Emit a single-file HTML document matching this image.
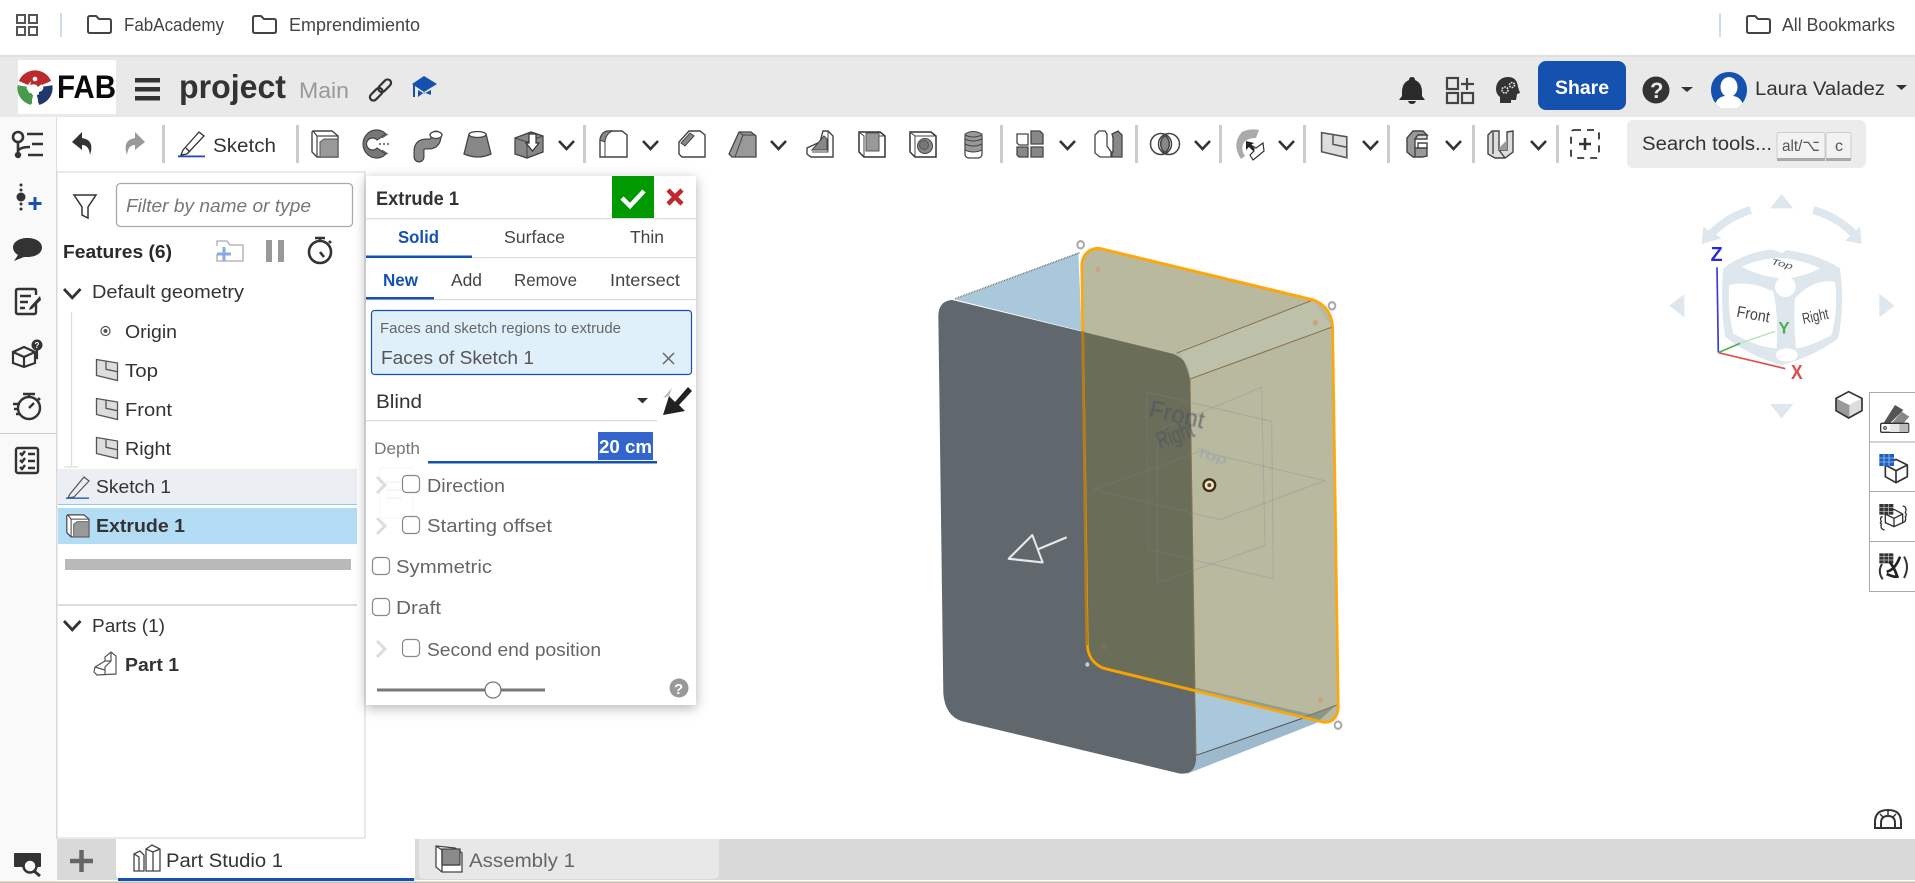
<!DOCTYPE html>
<html><head><meta charset="utf-8"><title>project</title>
<style>
html,body{margin:0;padding:0;background:#fff;width:1915px;height:883px;overflow:hidden}
svg{display:block;position:absolute;left:0;top:0}
text{font-family:"Liberation Sans","DejaVu Sans",sans-serif;fill:#333;white-space:pre}
</style></head><body>
<svg width="1915" height="883" viewBox="0 0 1915 883" xmlns="http://www.w3.org/2000/svg">
<defs>
<filter id="sh" x="-15%" y="-10%" width="130%" height="120%"><feDropShadow dx="0" dy="3" stdDeviation="6" flood-color="#000" flood-opacity=".3"/></filter>
<filter id="bl" x="-5%" y="-5%" width="110%" height="110%"><feGaussianBlur stdDeviation=".4"/></filter>
<g id="chev"><path d="M0 0L7.5 8L15 0" fill="none" stroke="#333" stroke-width="2.6"/></g>
<g id="plane"><path d="M.5 .5L21.500 4V21.500L.5 16.500z" fill="#ddd" stroke="#555" stroke-width="1.300"/><path d="M10 2V10.300L21.500 12.700" fill="none" stroke="#555" stroke-width="1.300"/></g>
<g id="cb"><rect x=".5" y=".5" width="17" height="17" rx="4" fill="#fff" stroke="#888" stroke-width="1.200"/></g>
<g id="gch"><path d="M0 0L8 8L0 16" fill="none" stroke="#ddd" stroke-width="3"/></g>
<g id="fold"><path d="M1 3Q1 1 3 1H9L12 4H22Q24 4 24 6V16Q24 18 22 18H3Q1 18 1 16z" fill="none" stroke="#444" stroke-width="2"/></g>
</defs>

<!-- bookmarks bar -->
<rect width="1915" height="55" fill="#fff"/>
<rect y="55" width="1915" height="2" fill="#dfdfdf"/>
<g fill="none" stroke="#555" stroke-width="2"><rect x="17" y="15" width="8" height="8"/><rect x="29" y="15" width="8" height="8"/><rect x="17" y="27" width="8" height="8"/><rect x="29" y="27" width="8" height="8"/></g>
<rect x="60" y="13" width="2" height="24" fill="#c9dcf5"/>
<use href="#fold" x="87" y="15"/>
<text x="124" y="31" font-size="18" textLength="100" lengthAdjust="spacingAndGlyphs" style="fill:#444">FabAcademy</text>
<use href="#fold" x="252" y="15"/>
<text x="289" y="31" font-size="18" textLength="131" lengthAdjust="spacingAndGlyphs" style="fill:#444">Emprendimiento</text>
<rect x="1719" y="13" width="2" height="24" fill="#c9dcf5"/>
<use href="#fold" x="1746" y="15"/>
<text x="1782" y="31" font-size="18" textLength="113" lengthAdjust="spacingAndGlyphs" style="fill:#444">All Bookmarks</text>

<!-- header -->
<rect y="57" width="1915" height="60" fill="#e9e9e9"/>
<rect x="18" y="60" width="98" height="54" fill="#fff"/>
<path d="M23.500 83A12.500 12.500 0 0 1 46.500 83" fill="none" stroke="#bd2a2c" stroke-width="10"/>
<path d="M30 85Q36 83 38 87L44 82L32 78z" fill="#bd2a2c"/>
<path d="M22.500 86A12.500 12.500 0 0 0 32 100" fill="none" stroke="#4a9a4e" stroke-width="10"/>
<path d="M47.500 86A12.500 12.500 0 0 1 38 100" fill="none" stroke="#23386a" stroke-width="10"/>
<path d="M27 96Q30 91 32 94L32 104L26 102z" fill="#4a9a4e"/>
<path d="M39 92L44 90L43 100L38 103z" fill="#23386a"/>
<circle cx="29" cy="88" r="2.300" fill="#fff"/><circle cx="41" cy="88" r="2.300" fill="#fff"/><circle cx="35" cy="79" r="2.300" fill="#fff"/>
<text x="57" y="98" font-size="32" font-weight="bold" textLength="59" lengthAdjust="spacingAndGlyphs" style="fill:#0a0a0a">FAB</text>
<g fill="#333"><rect x="135" y="78" width="25" height="4.500"/><rect x="135" y="87" width="25" height="4.500"/><rect x="135" y="96" width="25" height="4.500"/></g>
<text x="179" y="98" font-size="33" font-weight="bold" textLength="107" lengthAdjust="spacingAndGlyphs">project</text>
<text x="299" y="98" font-size="22" textLength="50" lengthAdjust="spacingAndGlyphs" style="fill:#999">Main</text>
<g transform="rotate(-45 380.500 90)" fill="none" stroke="#333" stroke-width="2.200"><rect x="367" y="86.500" width="15" height="7" rx="3.500"/><rect x="379" y="86.500" width="15" height="7" rx="3.500"/></g>
<g fill="#1552af"><path d="M412 84L424 76L437 84L424 92z"/><path d="M418 90L424 93.500L431 90V95L424 92.500L418 97z"/><rect x="413" y="85" width="2" height="12"/></g>

<!-- header right -->
<path d="M1412 77Q1415 77 1415 80Q1422 83 1422 92V96L1425 100H1399L1402 96V92Q1402 83 1409 80Q1409 77 1412 77zM1408 101H1416Q1415 104 1412 104Q1409 104 1408 101z" fill="#2b2b2b"/>
<g fill="none" stroke="#444" stroke-width="2.200"><rect x="1447" y="78" width="11" height="11"/><rect x="1447" y="93" width="11" height="10"/><rect x="1462" y="93" width="11" height="10"/><path d="M1467 78V90M1461 84H1474"/></g>
<path d="M1508 77C1500 77 1496 83 1496 89Q1496 94 1500 97V103H1511V100H1516L1517 94L1520 93L1518 87Q1517 77 1508 77z" fill="#333"/>
<circle cx="1505" cy="90" r="3" fill="none" stroke="#e9e9e9" stroke-width="1.600" stroke-dasharray="1.600 1"/><circle cx="1512" cy="85" r="2.500" fill="none" stroke="#e9e9e9" stroke-width="1.600" stroke-dasharray="1.600 1"/>
<rect x="1538" y="61" width="88" height="49" rx="8" fill="#1552af"/>
<text x="1555" y="94" font-size="19" font-weight="bold" textLength="54" lengthAdjust="spacingAndGlyphs" style="fill:#fff">Share</text>
<circle cx="1656" cy="90" r="13.500" fill="#333"/>
<text x="1650" y="98" font-size="22" font-weight="bold" style="fill:#e9e9e9">?</text>
<path d="M1681 87H1693L1687 92z" fill="#333"/>
<clipPath id="av"><path d="M1711 90C1711 78 1720 72 1729 72S1747 78 1747 90Q1747 100 1738 108H1720Q1711 100 1711 90z"/></clipPath>
<g clip-path="url(#av)"><rect x="1711" y="72" width="36" height="36" fill="#1552af"/><ellipse cx="1729" cy="87" rx="8.500" ry="10" fill="#fff"/><path d="M1714 108Q1716 97 1725 96H1733Q1742 97 1744 108z" fill="#fff"/></g>
<text x="1755" y="95" font-size="19" textLength="130" lengthAdjust="spacingAndGlyphs">Laura Valadez</text>
<path d="M1896 85H1907L1901.500 90z" fill="#333"/>

<!-- left rail -->
<rect y="117" width="57" height="722" fill="#f9f9f9"/>
<rect x="56" y="117" width="1" height="722" fill="#ddd"/>
<rect y="839" width="57" height="44" fill="#f9f9f9"/>
<g fill="none" stroke="#333" stroke-width="2.600"><circle cx="18" cy="137" r="5"/><path d="M18 142V153M18 151Q20 147 30 147M27 134H43M32 144H43M28 155H43"/></g><circle cx="18" cy="155" r="3.200" fill="#333"/>
<g fill="#333"><circle cx="21" cy="185" r="1.500"/><circle cx="21" cy="190" r="1.500"/><circle cx="21" cy="197" r="4.500"/><circle cx="21" cy="204" r="1.500"/><circle cx="21" cy="209" r="1.500"/></g>
<path d="M35 197V210M28.500 203.500H41.500" stroke="#1552af" stroke-width="3"/>
<path d="M27.500 238C36 238 42 242 42 247.500S36 257 27.500 257H24L14 261L18 255Q13 252 13 247.500C13 242 19 238 27.500 238z" fill="#333"/>
<g fill="none" stroke="#333" stroke-width="2.400"><path d="M36 303V312Q36 314 34 314H18Q16 314 16 312V291Q16 289 18 289H34Q36 289 36 291V295"/><path d="M20 296H31M20 302H28M20 308H25"/></g><path d="M30 307L40 296L41 300L32 309L29 310z" fill="#333"/>
<g fill="none" stroke="#333" stroke-width="2.200"><path d="M24 347L35 352V363L24 367L13 363V352zM13 352L24 357L35 352M24 357V367"/><path d="M35 358H37V350"/></g><circle cx="37" cy="345" r="5.500" fill="#333"/><text x="34.500" y="348" font-size="8" font-weight="bold" style="fill:#fff">?</text>
<g fill="none" stroke="#333" stroke-width="2.400"><circle cx="29" cy="408" r="11"/><path d="M23 394H35M29 394V397M38 398L40 400M29 408L34 403M13 404H20M14 409H19M16 414H20"/></g>
<rect x="0" y="433" width="56" height="1" fill="#ccc"/>
<g fill="none" stroke="#333" stroke-width="2.400"><rect x="16" y="448" width="22" height="25" rx="2"/><path d="M20 453L22 455L25 451M20 460L22 462L25 458M20 467L22 469L25 465"/><path d="M28 454H35M28 461H35M28 468H35"/></g>
<rect x="14" y="853" width="27" height="14" fill="#333" rx="1"/><circle cx="30" cy="866" r="6.500" fill="#f9f9f9" stroke="#333" stroke-width="2.500"/><path d="M34 871L40 876" stroke="#333" stroke-width="3"/>

<!-- toolbar seps -->
<g fill="#ccc"><rect x="162" y="125" width="3" height="38"/><rect x="296" y="125" width="3" height="38"/><rect x="583" y="125" width="3" height="38"/><rect x="1000" y="125" width="3" height="38"/><rect x="1135" y="125" width="3" height="38"/><rect x="1219" y="125" width="3" height="38"/><rect x="1303" y="125" width="3" height="38"/><rect x="1387" y="125" width="3" height="38"/><rect x="1472" y="125" width="3" height="38"/><rect x="1556" y="125" width="3" height="38"/></g>

<!-- undo / redo / sketch -->
<path d="M82 132L72 142L82 150V145Q89 145 90 155Q95 140 82 138z" fill="#333"/>
<path d="M135 132L145 142L135 150V145Q128 145 127 155Q122 140 135 138z" fill="#999"/>
<g fill="none" stroke="#333" stroke-width="1.300"><path d="M183 150L199 132L204 136L187 154L181 155z"/><path d="M186 148L190 152"/></g><rect x="178" y="155.500" width="27" height="1.800" fill="#1552af"/>
<text x="213" y="152" font-size="19" textLength="63" lengthAdjust="spacingAndGlyphs">Sketch</text>

<!-- toolbar icons -->
<g transform="translate(311,130)"><path d="M2 1H21L27 6V27H6L1 22V2z" fill="#fff" stroke="#444" stroke-width="1.400"/><path d="M9 12L13 9H27V27H9z" fill="#999" stroke="#555"/><path d="M2 1L6 6V27M6 6H27" fill="none" stroke="#444" stroke-width="1.200"/></g>
<g transform="translate(362,130)"><path d="M24 4A13.500 14 0 1 0 24 24L15 18A6 6 0 1 1 15 10z" fill="#777" stroke="#444" stroke-width="1.200"/><path d="M17 14H28" stroke="#333" stroke-width="1.200" stroke-dasharray="2 2"/><path d="M20 8L26 4M20 20L26 24" stroke="#555"/></g>
<g transform="translate(413,130)"><path d="M6 27V21Q6 14 13 14H16Q23 14 23 6" fill="none" stroke="#444" stroke-width="11" stroke-linecap="round"/><path d="M6 27V21Q6 14 13 14H16Q23 14 23 6" fill="none" stroke="#8a8a8a" stroke-width="8.500" stroke-linecap="round"/><ellipse cx="23" cy="5" rx="6" ry="3.500" fill="#fff" stroke="#444" stroke-width="1.300"/></g>
<g transform="translate(464,130)"><path d="M5 4L22 4L27 24Q14 30 0 24z" fill="#888" stroke="#444" stroke-width="1.300"/><ellipse cx="13.500" cy="4.500" rx="8.500" ry="3" fill="#fff" stroke="#444" stroke-width="1.300"/></g>
<g transform="translate(515,130)"><path d="M0 8L16 2L28 6V22L12 28L0 24z" fill="#888" stroke="#444" stroke-width="1.300"/><path d="M0 8L12 12L28 6M12 12V28" stroke="#444" fill="none"/><path d="M14 4H21V13H24L17.500 21L11 13H14z" fill="#fff" stroke="#333" stroke-width="1.200"/></g>
<use href="#chev" x="559" y="141"/>
<g transform="translate(599,130)"><path d="M1 27V10Q2 2 9 1H23L28 5V27z" fill="#fff" stroke="#444" stroke-width="1.400"/><path d="M1 10Q2 2 9 1H14Q7 3 6 12z" fill="#888" stroke="#444"/><path d="M6 12V27" stroke="#444"/></g>
<use href="#chev" x="643" y="141"/>
<g transform="translate(678,130)"><path d="M1 12L11 1H22L27 5V27H4L1 24z" fill="#fff" stroke="#444" stroke-width="1.400"/><path d="M3 13L12 3L16 6L7 16z" fill="#888" stroke="#444"/></g>
<g transform="translate(729,130)"><path d="M0 24L10 2H22L27 6V27H3z" fill="#999" stroke="#444" stroke-width="1.300"/><path d="M10 2L14 5H27M14 5L6 27" fill="none" stroke="#444"/></g>
<use href="#chev" x="771" y="141"/>
<g transform="translate(806,130)"><path d="M1 18V24L5 27H27V6L22 1H17L14 12z" fill="#fff" stroke="#444" stroke-width="1.400"/><path d="M6 20L18 6L21 9V20z" fill="#888" stroke="#444"/><path d="M22 1V22H6" fill="none" stroke="#444"/></g>
<g transform="translate(858,130)"><path d="M1 2H22L27 6V27H6L1 22z" fill="#fff" stroke="#333" stroke-width="1.500"/><path d="M8 3H21V21H8z" fill="#999" stroke="#555"/><path d="M1 2L6 6V27M21 6H27" fill="none" stroke="#444"/></g>
<g transform="translate(909,130)"><path d="M1 2H22L27 6V27H6L1 22z" fill="#fff" stroke="#333" stroke-width="1.500"/><path d="M1 2L6 6V27M6 6H27" fill="none" stroke="#444"/><circle cx="16" cy="16" r="7.500" fill="#888" stroke="#444"/><circle cx="15" cy="15" r="4.500" fill="#777" stroke="#555"/></g>
<g transform="translate(964,130)"><rect x="1" y="3" width="17" height="25" rx="4" fill="#fff" stroke="#444" stroke-width="1.300"/><path d="M1 4Q9 -1 18 4V20Q9 24 1 20z" fill="#999" stroke="#444"/><path d="M1 9Q9 13 18 9M1 14Q9 18 18 14M1 5Q9 9 18 5" fill="none" stroke="#444"/></g>
<g transform="translate(1016,130)" stroke="#444" stroke-width="1.300"><path d="M1 4H12V15H3L1 13z" fill="#fff"/><path d="M15 1H24L27 4V14H15z" fill="#888"/><path d="M1 17H12V27H3L1 25z" fill="#888"/><path d="M15 17H27V27H15z" fill="#888"/></g>
<use href="#chev" x="1060" y="141"/>
<g transform="translate(1094,130)" stroke="#444" stroke-width="1.300"><path d="M1 5L5 1H11L13 4V16L17 22V27H6L1 23z" fill="#fff"/><path d="M18 4L24 1L28 5V27H18V22H19V8z" fill="#888"/></g>
<g transform="translate(1150,133)" stroke="#444" stroke-width="1.500"><circle cx="11" cy="11" r="10.500" fill="#fff"/><circle cx="19" cy="11" r="10.500" fill="none"/><path d="M15 2.500A10.500 10.500 0 0 1 15 19.500A10.500 10.500 0 0 1 15 2.500z" fill="#888"/></g>
<use href="#chev" x="1195" y="141"/>
<g transform="translate(1234,129)"><path d="M7 30Q-3 15 8 3Q16 -1 25 1L22 9Q12 9 9 15Q7 22 11 27z" fill="#aaa"/><path d="M15 15L22 19L29 14L30 22L24 27L19 31L16 26L20 22z" fill="#fff" stroke="#333" stroke-width="1.200"/><path d="M12 12L12 21L15 18L19 22L21 20L17 16L20 14z" fill="#222"/></g>
<use href="#chev" x="1279" y="141"/>
<use href="#plane" transform="translate(1321,132) scale(1.200)"/>
<use href="#chev" x="1363" y="141"/>
<g transform="translate(1406,130)" stroke="#444" stroke-width="1.400"><path d="M1 8L7 1H17L21 5H12L9 9V18H21V26L16 27H7L1 22z" fill="#999"/><path d="M12 5L9 9H21V5zM9 18V27" fill="#ddd"/><path d="M12 13H21V18H12z" fill="#fff"/></g>
<use href="#chev" x="1446" y="141"/>
<g transform="translate(1487,130)" stroke="#444" stroke-width="1.400"><path d="M1 5L5 1H12V20H20V2L26 1V22L18 28H8L1 24z" fill="#ddd"/><path d="M6 2V24M12 20L18 28" fill="none"/><path d="M12 18L20 10V20H12z" fill="#999" stroke="none"/></g>
<use href="#chev" x="1531" y="141"/>
<rect x="1571" y="130" width="28" height="28" rx="3" fill="none" stroke="#333" stroke-width="1.800" stroke-dasharray="7 6"/><path d="M1585 138V150M1579 144H1591" stroke="#333" stroke-width="2.500"/>

<!-- search tools -->
<rect x="1627" y="120" width="239" height="48" rx="6" fill="#ececec"/>
<text x="1642" y="150" font-size="19" textLength="130" lengthAdjust="spacingAndGlyphs">Search tools...</text>
<rect x="1777" y="132.500" width="48" height="27" rx="2" fill="#f2f2f2" stroke="#ccc"/><rect x="1777" y="158" width="48" height="3" fill="#aaa"/>
<text x="1782" y="151" font-size="16" textLength="38" lengthAdjust="spacingAndGlyphs" style="fill:#555">alt/⌥</text>
<rect x="1826" y="132.500" width="25" height="27" rx="2" fill="#f2f2f2" stroke="#ccc"/><rect x="1826" y="158" width="25" height="3" fill="#aaa"/>
<text x="1835" y="151" font-size="16" style="fill:#555">c</text>

<!-- tabs bar -->
<rect x="57" y="839" width="1858" height="41" fill="#d9d9d9"/>
<rect y="881.500" width="1915" height="1.500" fill="#c5bfa9"/>
<path d="M81.500 850V872M70 861H93" stroke="#666" stroke-width="4.500"/>
<path d="M116 839H415V874Q415 880 409 880H122Q116 880 116 874z" fill="#fff"/>
<rect x="118" y="878" width="296" height="3" fill="#1552af"/>
<g fill="#fff" stroke="#444" stroke-width="1.300"><path d="M134 854L140 851L144 855V871H134z"/><path d="M146 849L152 845L160 849V871H146z"/><path d="M146 849L153 852V871M153 852L160 849M134 854L139 857V871" fill="none"/></g>
<text x="166" y="867" font-size="19" textLength="117" lengthAdjust="spacingAndGlyphs">Part Studio 1</text>
<path d="M419 839H719V873Q719 879 713 879H425Q419 879 419 873z" fill="#e8e8e8"/>
<g transform="translate(435,845)" stroke="#444" stroke-width="1.300"><path d="M1 1L20 3L27 8V27H7L1 22z" fill="#fff"/><path d="M7 4H25V20H7z" fill="#8a8a8a"/><path d="M1 1L7 5V27M7 20H25" fill="none"/></g>
<text x="469" y="867" font-size="19" textLength="106" lengthAdjust="spacingAndGlyphs" style="fill:#666">Assembly 1</text>

<!-- features panel -->
<path d="M57 172H365V838H57z" fill="#fff" stroke="#d4d4d4"/>
<path d="M74 195H96L88 207V218L82 215V207z" fill="none" stroke="#333" stroke-width="1.500"/>
<rect x="116.500" y="183.500" width="236" height="43" rx="4" fill="#fff" stroke="#aaa" stroke-width="1.300"/>
<text x="126" y="212" font-size="18" font-style="italic" textLength="185" lengthAdjust="spacingAndGlyphs" style="fill:#777">Filter by name or type</text>
<text x="63" y="258" font-size="18.500" font-weight="bold" textLength="109" lengthAdjust="spacingAndGlyphs" style="fill:#2a2a2a">Features (6)</text>
<path d="M217 246V241H227L230 245H243V261H217V254" fill="none" stroke="#aaa" stroke-width="1.300"/><path d="M224 247V261M217 254H231" stroke="#8aa9dd" stroke-width="3"/>
<rect x="266" y="240" width="6" height="22" fill="#999"/><rect x="278" y="240" width="6" height="22" fill="#999"/>
<g fill="none" stroke="#333" stroke-width="2.600"><circle cx="320" cy="252" r="11"/><path d="M315 238H325M320 238V241M329 241L331 243M320 252L324 257"/></g>

<use href="#chev" transform="translate(64,289) scale(1.100)"/>
<text x="92" y="298" font-size="18.500" textLength="152" lengthAdjust="spacingAndGlyphs">Default geometry</text>
<path d="M71.500 312V466M64 467H78" stroke="#ddd" stroke-width="1.200"/>
<circle cx="105.500" cy="331" r="4.500" fill="none" stroke="#555" stroke-width="1.200"/><circle cx="105.500" cy="331" r="2" fill="#555"/>
<text x="125" y="338" font-size="18.500" textLength="52" lengthAdjust="spacingAndGlyphs">Origin</text>
<use href="#plane" x="96" y="359"/>
<text x="125" y="377" font-size="18.500" textLength="33" lengthAdjust="spacingAndGlyphs">Top</text>
<use href="#plane" x="96" y="398"/>
<text x="125" y="416" font-size="18.500" textLength="47" lengthAdjust="spacingAndGlyphs">Front</text>
<use href="#plane" x="96" y="437"/>
<text x="125" y="455" font-size="18.500" textLength="46" lengthAdjust="spacingAndGlyphs">Right</text>
<rect x="58" y="469" width="299" height="35" fill="#ebeef3"/>
<rect x="58" y="504" width="299" height="1" fill="#8ecbf0"/>
<g fill="none" stroke="#555" stroke-width="1.200"><path d="M70 494L84 477L89 481L74 497L68 498z"/></g><rect x="66" y="497.500" width="23" height="1.300" fill="#1552af"/>
<text x="96" y="493" font-size="18.500" textLength="75" lengthAdjust="spacingAndGlyphs">Sketch 1</text>
<rect x="58" y="508" width="299" height="36" fill="#b3dcf5"/>
<g transform="translate(66,514) scale(.85)"><path d="M2 1H21L27 6V27H6L1 22V2z" fill="#fff" stroke="#444" stroke-width="1.400"/><path d="M9 12L13 9H27V27H9z" fill="#999" stroke="#555"/><path d="M2 1L6 6V27M6 6H27" fill="none" stroke="#444" stroke-width="1.200"/></g>
<text x="96" y="532" font-size="18.500" font-weight="bold" textLength="89" lengthAdjust="spacingAndGlyphs">Extrude 1</text>
<rect x="65" y="559" width="286" height="11" fill="#b9b9b9"/>
<rect x="57" y="604" width="300" height="2" fill="#ddd"/>
<use href="#chev" transform="translate(64,621) scale(1.100)"/>
<text x="92" y="632" font-size="18.500" textLength="73" lengthAdjust="spacingAndGlyphs">Parts (1)</text>
<g fill="#fff" stroke="#555" stroke-width="1.200"><path d="M95 667L105 661V657L111 652L116 656V674L97 675L94 672z"/><path d="M111 652V661L105 667V675M95 667L105 670M105 661L111 661"  fill="none"/></g>
<text x="125" y="671" font-size="18.500" font-weight="bold" textLength="54" lengthAdjust="spacingAndGlyphs">Part 1</text>

<!-- dialog -->
<rect x="366" y="176" width="330" height="529" fill="#fff" filter="url(#sh)"/>
<text x="376" y="205" font-size="19" font-weight="bold" textLength="83" lengthAdjust="spacingAndGlyphs">Extrude 1</text>
<rect x="612" y="176" width="42" height="42" fill="#009900"/>
<path d="M622 198L630 206L644 191" fill="none" stroke="#fff" stroke-width="4.500"/>
<path d="M668 190L682 204M682 190L668 204" stroke="#c1272d" stroke-width="4.500"/>
<rect x="366" y="218" width="330" height="1.300" fill="#ddd"/>
<text x="398" y="243" font-size="17.500" font-weight="bold" textLength="41" lengthAdjust="spacingAndGlyphs" style="fill:#1552af">Solid</text>
<text x="504" y="243" font-size="17.500" textLength="61" lengthAdjust="spacingAndGlyphs" style="fill:#444">Surface</text>
<text x="630" y="243" font-size="17.500" textLength="34" lengthAdjust="spacingAndGlyphs" style="fill:#444">Thin</text>
<rect x="366" y="257" width="330" height="1.300" fill="#ddd"/><rect x="366" y="255.500" width="106" height="2.500" fill="#1552af"/>
<text x="383" y="286" font-size="17.500" font-weight="bold" textLength="35" lengthAdjust="spacingAndGlyphs" style="fill:#1552af">New</text>
<text x="451" y="286" font-size="17.500" textLength="31" lengthAdjust="spacingAndGlyphs" style="fill:#444">Add</text>
<text x="514" y="286" font-size="17.500" textLength="63" lengthAdjust="spacingAndGlyphs" style="fill:#444">Remove</text>
<text x="610" y="286" font-size="17.500" textLength="70" lengthAdjust="spacingAndGlyphs" style="fill:#444">Intersect</text>
<rect x="366" y="299" width="330" height="1.300" fill="#ddd"/><rect x="366" y="297" width="68" height="2.500" fill="#1552af"/>
<rect x="371.500" y="310.500" width="320" height="64" rx="3" fill="#dff0fa" stroke="#1552af" stroke-width="1.200"/>
<text x="380" y="333" font-size="14.500" textLength="241" lengthAdjust="spacingAndGlyphs" style="fill:#666">Faces and sketch regions to extrude</text>
<text x="381" y="364" font-size="18" textLength="153" lengthAdjust="spacingAndGlyphs" style="fill:#555">Faces of Sketch 1</text>
<path d="M663 353L674 364M674 353L663 364" stroke="#666" stroke-width="1.500"/>
<text x="376" y="408" font-size="19" textLength="46" lengthAdjust="spacingAndGlyphs">Blind</text>
<path d="M637 398H648L642.500 403.500z" fill="#333"/>
<path d="M663 398L672 388L669 396z" fill="#bbb"/><path d="M663 415L669 396L675 402L688 387L692 391L679 405L685 411z" fill="#222"/>
<rect x="366" y="420" width="291" height="1.300" fill="#ddd"/>
<text x="374" y="454" font-size="17" textLength="46" lengthAdjust="spacingAndGlyphs" style="fill:#777">Depth</text>
<rect x="598" y="432" width="55" height="28" fill="#3366cc"/>
<text x="599" y="453" font-size="18.500" font-weight="bold" textLength="53" lengthAdjust="spacingAndGlyphs" style="fill:#fff">20 cm</text>
<rect x="428" y="461" width="229" height="2.500" fill="#1552af"/>
<rect x="380" y="468" width="33" height="50" fill="none" stroke="#f5f5f5"/><path d="M386 482H402M386 490H402M386 498H402" stroke="#f3f3f3" stroke-width="1.500"/>
<use href="#gch" x="377" y="477"/><use href="#cb" x="402" y="475"/>
<text x="427" y="492" font-size="18" textLength="78" lengthAdjust="spacingAndGlyphs" style="fill:#666">Direction</text>
<use href="#gch" x="377" y="518"/><use href="#cb" x="402" y="516"/>
<text x="427" y="532" font-size="18" textLength="125" lengthAdjust="spacingAndGlyphs" style="fill:#666">Starting offset</text>
<use href="#cb" x="372" y="557"/>
<text x="396" y="573" font-size="18" textLength="96" lengthAdjust="spacingAndGlyphs" style="fill:#666">Symmetric</text>
<use href="#cb" x="372" y="598"/>
<text x="396" y="614" font-size="18" textLength="45" lengthAdjust="spacingAndGlyphs" style="fill:#666">Draft</text>
<use href="#gch" x="377" y="641"/><use href="#cb" x="402" y="639"/>
<text x="427" y="656" font-size="18" textLength="174" lengthAdjust="spacingAndGlyphs" style="fill:#666">Second end position</text>
<rect x="377" y="688.500" width="168" height="3" fill="#777"/>
<circle cx="493" cy="690" r="8" fill="#fff" stroke="#777" stroke-width="1.300"/>
<circle cx="679" cy="688" r="9.500" fill="#999"/>
<text x="674" y="694" font-size="15" font-weight="bold" style="fill:#fff">?</text>

<!-- 3D view -->
<g transform="translate(900,220) scale(.33333,.3698)" filter="url(#bl)">
<path d="M165 215L535 90L545 300Z" fill="#a9c8dc"/>
<path d="M165 213L540 88" stroke="#6a7680" stroke-width="4" stroke-dasharray="3 2" fill="none"/>
<path d="M888 1265L1250 1340L885 1450Z" fill="#a9c8dc"/>
<path d="M888 1450L1215 1345L1310 1310L1250 1360L860 1498Z" fill="#9dbacd"/>
<path d="M888 1448L1215 1345" stroke="#555" stroke-width="3"/>
<path d="M115 260Q115 220 155 216L820 362Q870 380 870 430L888 1460Q885 1500 840 1497L185 1355Q135 1340 130 1280z" fill="#60676e"/>
<path d="M830 360L1240 216Q1280 235 1295 290L870 430Q865 385 830 360z" fill="#fff"/>
<path d="M545 120Q550 80 595 76L1240 216Q1295 235 1298 290L1315 1320Q1310 1360 1270 1358L610 1212Q565 1195 562 1150z" fill="rgb(116,116,66)" fill-opacity=".5"/>
<path d="M840 352L1240 216L1295 290L870 430z" fill="#c9d4c2" fill-opacity=".3"/>
<path d="M830 360L1240 216M870 430L1295 290M870 430L888 1450" stroke="#8a7350" stroke-width="3" fill="none"/>
<path d="M1210 1345L1310 1312" stroke="#8a7350" stroke-width="3"/>
<g fill="none" stroke="#6f8a94" stroke-width="3" stroke-opacity=".3"><path d="M740 465L1115 545L1120 970L745 890z"/><path d="M772 570L1085 452L1095 880L772 982z"/><path d="M582 730L900 625L1275 705L960 810z"/></g>
<path d="M545 120Q550 80 595 76L1240 216Q1295 235 1298 290L1315 1320Q1310 1360 1270 1358L610 1212Q565 1195 562 1150z" fill="none" stroke="#ffa500" stroke-width="8" stroke-opacity=".95"/>
<path d="M548 300L560 1150" stroke="#b07c1c" stroke-width="8"/>
<ellipse cx="928" cy="717" rx="21" ry="19" fill="#3a2e18"/><ellipse cx="928" cy="717" rx="14" ry="12.500" fill="#f0e6c8"/><ellipse cx="928" cy="717" rx="6" ry="5.500" fill="#5a4420"/>
<g fill="#c9a483"><circle cx="594" cy="134" r="8"/><circle cx="1246" cy="278" r="8"/><circle cx="1262" cy="1298" r="8"/></g><circle cx="612" cy="1156" r="8" fill="#7d6d55"/>
<circle cx="562" cy="1202" r="6" fill="#ccc"/>
<g fill="none" stroke="#aaa" stroke-width="6"><circle cx="542" cy="67" r="10"/><circle cx="1296" cy="232" r="10"/><circle cx="1314" cy="1366" r="10"/></g>
<path d="M326 916L397 852L428 926zM415 890L500 858" fill="none" stroke="#e8e8e8" stroke-width="6" stroke-linejoin="round"/>
</g>
<g filter="url(#bl)">
<text x="1148" y="416" font-size="24" transform="rotate(13 1148 416)" textLength="56" lengthAdjust="spacingAndGlyphs" style="fill:#4a5560;fill-opacity:.7">Front</text>
<text x="1160" y="449" font-size="24" transform="rotate(-20 1160 449)" textLength="38" lengthAdjust="spacingAndGlyphs" style="fill:#4a5560;fill-opacity:.7">Right</text>
<text x="1195" y="456" font-size="13" transform="rotate(15 1195 456)" textLength="32" lengthAdjust="spacingAndGlyphs" style="fill:#8ea2a8;fill-opacity:.7">Top</text>
</g>

<!-- view cube -->
<g transform="translate(1640,170) scale(.33333)">
<g filter="url(#bl)" fill="#dfe7ee">
<path d="M425 72L460 115H390z"/><path d="M425 745L460 702H390z"/><path d="M88 407L133 372V442z"/><path d="M764 407L718 372V442z"/>
<path d="M332 120Q265 140 215 190" fill="none" stroke="#dfe7ee" stroke-width="24"/><path d="M185 222L190 170L245 205z"/>
<path d="M520 120Q590 140 640 190" fill="none" stroke="#dfe7ee" stroke-width="24"/><path d="M665 222L660 170L615 212z"/>
<path d="M380 240Q300 255 250 295Q240 400 255 500Q330 560 425 585Q520 560 595 505Q615 400 600 295Q540 255 440 240L425 250Q400 235 380 240z"/>
</g>
<g fill="#fff"><path d="M305 290Q370 260 440 265Q500 275 540 295Q480 325 425 325Q360 320 305 290z"/><path d="M268 345Q330 330 400 365Q415 430 410 535Q345 530 280 490Q262 420 268 345z"/><path d="M465 385Q520 325 585 335Q595 410 575 495Q510 530 468 535Q460 450 465 385z"/><circle cx="436" cy="350" r="31"/><ellipse cx="440" cy="555" rx="33" ry="20"/></g>
<text x="288" y="440" font-size="48" transform="rotate(10 288 440)" textLength="100" lengthAdjust="spacingAndGlyphs" style="fill:#444">Front</text>
<text x="490" y="462" font-size="46" transform="rotate(-12 490 462)" textLength="80" lengthAdjust="spacingAndGlyphs" style="fill:#444">Right</text>
<text x="392" y="282" font-size="26" transform="rotate(14 392 282)" font-style="italic" textLength="66" lengthAdjust="spacingAndGlyphs" style="fill:#555">Top</text>
<path d="M231 292L235 548" stroke="#3a3ad8" stroke-width="5"/>
<path d="M235 548L436 596" stroke="#e05050" stroke-width="5"/>
<path d="M235 548L300 520" stroke="#4caf50" stroke-width="5"/><path d="M300 520L405 484" stroke="#b5dfb7" stroke-width="4"/>
<text x="212" y="273" font-size="60" font-weight="bold" textLength="36" lengthAdjust="spacingAndGlyphs" style="fill:#2b2bd8">Z</text>
<text x="453" y="627" font-size="60" font-weight="bold" textLength="35" lengthAdjust="spacingAndGlyphs" style="fill:#e04a4a">X</text>
<text x="415" y="490" font-size="50" font-weight="bold" textLength="34" lengthAdjust="spacingAndGlyphs" style="fill:#4cae52">Y</text>
<path d="M588 685L626 665L666 685V722L626 744L588 722z" fill="#999"/>
<path d="M588 685L626 665L666 685L628 705z" fill="#fff"/><path d="M628 705L666 685V722L628 744z" fill="#ddd"/>
<path d="M588 685L626 665L666 685V722L626 744L588 722z" fill="none" stroke="#333" stroke-width="5"/>
</g>

<!-- right panel -->
<g fill="#fff" stroke="#aaa" stroke-width="1"><rect x="1869.500" y="392.500" width="50" height="49.500"/><rect x="1869.500" y="442" width="50" height="49.500"/><rect x="1869.500" y="491.500" width="50" height="50"/><rect x="1869.500" y="541.500" width="50" height="50"/></g>
<g transform="translate(1820,380) scale(.33333)">
<path d="M190 130L225 75L250 90L210 130z" fill="#555"/><path d="M215 130L245 95L268 110L250 130z" fill="#888"/>
<rect x="182" y="130" width="84" height="27" rx="4" fill="#fff" stroke="#333" stroke-width="4"/><rect x="210" y="132" width="28" height="24" fill="#e6e6e6"/><rect x="238" y="132" width="27" height="24" fill="#bbb"/><circle cx="195" cy="144" r="4" fill="none" stroke="#333" stroke-width="3"/>
<g fill="none" stroke="#333" stroke-width="5"><path d="M228 238L262 255V290L228 308L196 290V255zM196 255L228 272L262 255M228 272V308"/></g>
<rect x="178" y="222" width="44" height="36" fill="#1b5fc4"/><path d="M178 234H222M178 246H222M192 222V258M207 222V258" stroke="#9ec0f0" stroke-width="2.500"/>
<g fill="none" stroke="#333" stroke-width="4"><path d="M222 388L248 402V428L222 440L196 428V402zM196 402L222 415L248 402M222 415V440"/><path d="M188 410Q178 410 184 425Q178 430 184 432Q180 448 194 450M248 378Q262 380 256 398Q262 405 256 410Q260 425 248 428"/></g>
<rect x="178" y="372" width="42" height="32" fill="#333"/><path d="M178 383H220M178 394H220M192 372V404M206 372V404" stroke="#ccc" stroke-width="2"/>
<rect x="178" y="520" width="42" height="30" fill="#333"/><path d="M178 530H220M178 540H220M192 520V550M206 520V550" stroke="#ccc" stroke-width="2"/>
<path d="M186 552Q172 575 188 598M252 530Q270 560 252 594" fill="none" stroke="#333" stroke-width="6"/>
<path d="M200 575Q225 570 240 530M208 545Q222 560 232 590Q222 592 200 582" fill="none" stroke="#222" stroke-width="8"/>
</g>
<g fill="none" stroke="#333" stroke-width="2"><path d="M1875 828V822Q1875 810 1888 810Q1901 810 1901 822V828z"/><path d="M1881 828V823Q1881 816 1888 816Q1895 816 1895 823V828"/></g>
<path d="M1880 814L1883 817M1888 811V815M1896 814L1893 817" stroke="#333" stroke-width="1.500"/>
</svg>
</body></html>
